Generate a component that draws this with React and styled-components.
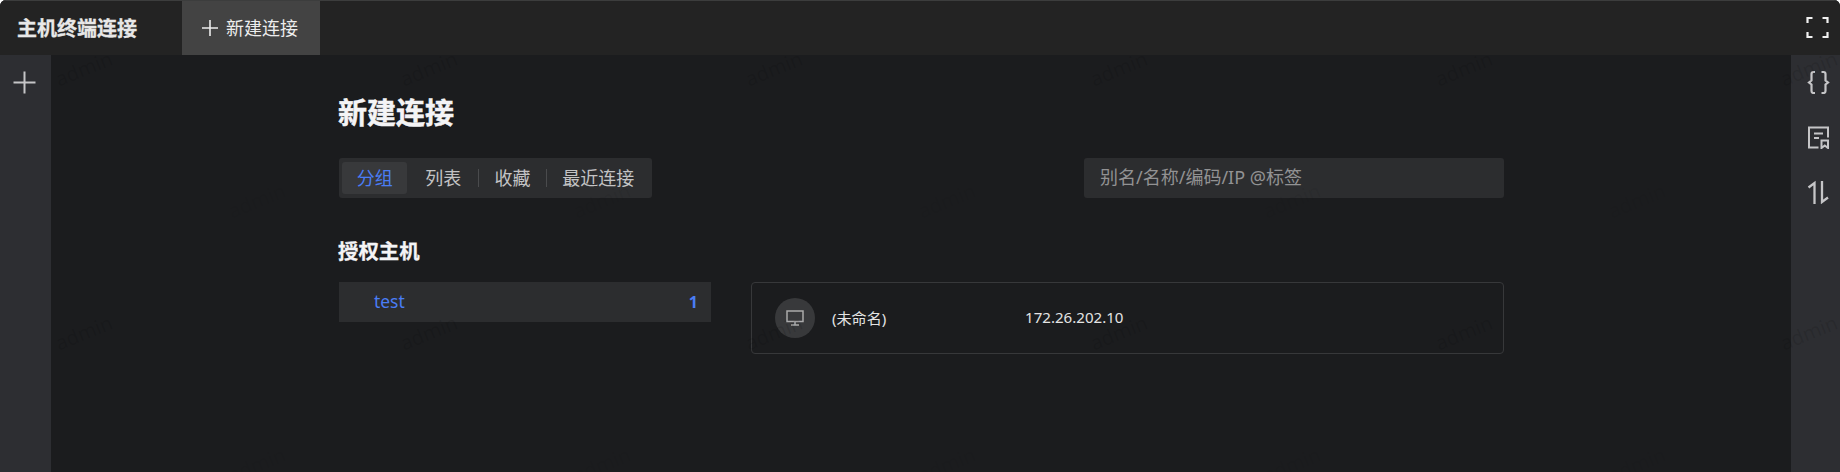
import React from "react";
import styled, { createGlobalStyle } from "styled-components";

const Global = createGlobalStyle`
  * { box-sizing: border-box; }
  html, body { margin: 0; background: #ffffff; }
  body { overflow: hidden; font-family: "Noto Sans", "Noto Sans CJK SC", sans-serif; }
  button { font: inherit; border: 0; background: none; padding: 0; color: inherit; }
  svg { display: block; }
`;

const Shell = styled.div`
  position: relative;
  display: flex;
  flex-direction: column;
  width: 1840px;
  height: 472px;
  overflow: hidden;
  border-radius: 6px 6px 0 0;
  background: #1b1c1e;
`;

const Header = styled.header`
  display: flex;
  align-items: stretch;
  height: 55px;
  background: #232323;
  border-top: 1px solid #3c3d3d;
`;

const Brand = styled.div`
  width: 182px;
  padding-left: 17px;
  font-size: 20px;
  line-height: 55px;
  font-weight: 700;
  color: #e8e8e8;
  -webkit-text-stroke: 0.3px currentColor;
  white-space: nowrap;
`;

const HeaderTab = styled.button`
  display: flex;
  align-items: center;
  gap: 8px;
  width: 138px;
  padding-left: 20px;
  background: #434343;
  color: #ededed;
  font-size: 18px;
  white-space: nowrap;
`;

const TabLabel = styled.span`
  padding-bottom: 3px;
`;

const HeaderAction = styled.button`
  display: flex;
  align-items: center;
  margin-left: auto;
  padding-right: 10px;
`;

const Body = styled.div`
  display: flex;
  flex: 1;
  min-height: 0;
`;

const Rail = styled.aside`
  display: flex;
  flex-direction: column;
  align-items: ${(p) => (p.$end ? "flex-end" : "flex-start")};
  width: ${(p) => (p.$end ? 49 : 51)}px;
  padding: ${(p) => (p.$end ? "0 10px 0 0" : "0 0 0 12px")};
  background: #2d2e32;
`;

const RailButton = styled.button`
  display: flex;
  align-items: center;
  height: 55px;
  padding-bottom: 1px;
`;

const Main = styled.main`
  flex: 1;
  padding: 37px 287px 0 288px;
`;

const Title = styled.h1`
  margin: 0 0 0 -1px;
  height: 42px;
  line-height: 42px;
  font-size: 29px;
  font-weight: 700;
  color: #f4f4f6;
  -webkit-text-stroke: 0.5px currentColor;
`;

const Toolbar = styled.div`
  display: flex;
  justify-content: space-between;
  margin-top: 24px;
`;

const Segments = styled.nav`
  display: flex;
  align-items: center;
  height: 40px;
  width: 313px;
  padding: 0 3px;
  border-radius: 3px;
  background: #2c2d2f;
`;

const Segment = styled.button`
  width: ${(p) => p.$width}px;
  height: 32px;
  line-height: 32px;
  padding-left: ${(p) => p.$inset || 0}px;
  border-radius: 3px;
  background: ${(p) => (p.$active ? "#38393b" : "transparent")};
  color: ${(p) => (p.$active ? "#4a7df5" : "#c3c3c4")};
  font-size: 18px;
  text-align: center;
  white-space: nowrap;
`;

const Divider = styled.i`
  width: 1px;
  height: 18px;
  background: #4a4b4d;
`;

const Search = styled.input`
  width: 420px;
  height: 40px;
  padding: 0 16px 2px;
  border: 0;
  border-radius: 3px;
  outline: 0;
  background: #2c2d2f;
  font: 18px "Noto Sans", "Noto Sans CJK SC", sans-serif;
  &::placeholder { color: #929293; opacity: 1; }
`;

const Subtitle = styled.h2`
  margin: 37px 0 0 -1px;
  height: 32px;
  line-height: 32px;
  font-size: 20.4px;
  font-weight: 700;
  color: #f4f4f6;
  -webkit-text-stroke: 0.3px currentColor;
`;

const Columns = styled.div`
  display: flex;
  align-items: flex-start;
  justify-content: space-between;
  margin-top: 15px;
`;

const Group = styled.div`
  display: flex;
  justify-content: space-between;
  width: 372px;
  height: 40px;
  padding: 0 13px 0 35px;
  background: #2c2d2f;
  color: #4a7df5;
  font-size: 17.4px;
  line-height: 39px;
`;

const Count = styled.span`
  font-size: 16px;
  font-weight: 700;
  line-height: 41px;
`;

const Host = styled.article`
  display: flex;
  align-items: center;
  width: 753px;
  height: 72px;
  padding-left: 23px;
  border: 1px solid #37383a;
  border-radius: 4px;
  color: #e4e4e4;
  font-size: 15.1px;
  white-space: nowrap;
`;

const HostIcon = styled.span`
  display: grid;
  place-items: center;
  width: 40px;
  height: 40px;
  border-radius: 50%;
  background: #38393b;
`;

const HostName = styled.span`
  width: 193px;
  margin-left: 17px;
  padding-bottom: 3px;
`;

const HostAddress = styled.span`
  padding-bottom: 2px;
`;

const Watermark = styled.div`
  position: absolute;
  inset: 0;
  overflow: hidden;
  pointer-events: none;
`;

const Mark = styled.span`
  position: absolute;
  left: ${(p) => p.$x}px;
  top: ${(p) => p.$y}px;
  transform: translate(-50%, -50%) rotate(-22deg);
  font-size: 20px;
  line-height: 1;
  color: rgba(0, 0, 0, ${(p) => (p.$faint ? 0.055 : 0.1)});
`;

const Icon = ({ size = 24, height, color = "#c5c5c7", weight = 2, children }) => (
  <svg width={size} height={height || size} viewBox={`0 0 ${size} ${height || size}`} fill="none" stroke={color} strokeWidth={weight}>
    {children}
  </svg>
);

const segments = [
  { label: "分组", width: 65, active: true, inset: 1 },
  { label: "列表", width: 72, inset: 2 },
  { label: "收藏", width: 67 },
  { label: "最近连接", width: 103, inset: 1 },
];

const marks = [0, 1, 2, 3].flatMap((row) =>
  Array.from({ length: row % 2 ? 5 : 6 }, (_, col) => ({
    x: 84 + col * 345 + (row % 2) * 173,
    y: 69 + row * 132,
    faint: row % 2 === 1,
  }))
);

export default function App() {
  return (
    <Shell>
      <Global />
      <Header>
        <Brand>主机终端连接</Brand>
        <HeaderTab>
          <Icon size={16} color="#ededed" weight={1.6}><path d="M8 0v16M0 8h16" /></Icon>
          <TabLabel>新建连接</TabLabel>
        </HeaderTab>
        <HeaderAction>
          <Icon size={24} color="#f0f0f0" weight={2.2}>
            <path d="M1.5 7V2h5M16.5 2h5v5M21.5 16v5h-5M6.5 21h-5v-5" />
          </Icon>
        </HeaderAction>
      </Header>
      <Body>
        <Rail>
          <RailButton><Icon size={24}><path d="M12.5 1.5v22M1.5 12.5h22" /></Icon></RailButton>
        </Rail>
        <Main>
          <Title>新建连接</Title>
          <Toolbar>
            <Segments>
              {segments.map((s, i) => (
                <React.Fragment key={s.label}>
                  {i > 1 && <Divider />}
                  <Segment $width={s.width} $active={s.active} $inset={s.inset}>{s.label}</Segment>
                </React.Fragment>
              ))}
            </Segments>
            <Search placeholder="别名/名称/编码/IP @标签" />
          </Toolbar>
          <Subtitle>授权主机</Subtitle>
          <Columns>
            <Group>test<Count>1</Count></Group>
            <Host>
              <HostIcon>
                <Icon size={18} height={16} color="#aaaaab" weight={1.5}>
                  <path d="M1 1h16v10.5H1zM9 11.5V15M5 15h8" />
                </Icon>
              </HostIcon>
              <HostName>(未命名)</HostName>
              <HostAddress>172.26.202.10</HostAddress>
            </Host>
          </Columns>
        </Main>
        <Rail $end>
          <RailButton>
            <Icon size={24} weight={2.2}><path d="M9 2H7.500Q5.500 2 5.500 4v6.500L3 12.500l2.500 2V21q0 2 2 2H9M15.500 2h2q2 0 2 2v6.500l2.500 2-2.500 2V21q0 2-2 2h-2" /></Icon>
          </RailButton>
          <RailButton>
            <Icon size={24}><path d="M12.500 22.500H3V2.500h19v10M8 8.500h9M8 13h5M15.500 15.500H22V23l-3.250-2.500L15.500 23z" /></Icon>
          </RailButton>
          <RailButton>
            <Icon size={24} weight={2.3}><path d="M2.500 7.500L8.500 3v21M16 1v21l6-4.500" /></Icon>
          </RailButton>
        </Rail>
      </Body>
      <Watermark aria-hidden="true">
        {marks.map((m) => <Mark key={`${m.x}-${m.y}`} $x={m.x} $y={m.y} $faint={m.faint}>admin</Mark>)}
      </Watermark>
    </Shell>
  );
}
